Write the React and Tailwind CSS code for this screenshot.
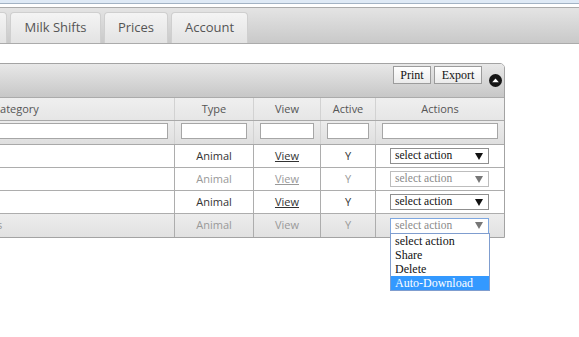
import React from 'react';

const cols = 'grid grid-cols-[316px_79px_67px_55px_129px]';

const rows = [
  { name: 'Cows', active: true },
  { name: 'Heifers', active: false },
  { name: 'Calves', active: true },
  { name: 'Pregnant Dry Cows & Bulls', active: false, hover: true, open: true },
];

const options = ['select action', 'Share', 'Delete', 'Auto-Download'];

const Caret = ({ color }) => (
  <svg width="8" height="7" viewBox="0 0 8 7" className="shrink-0">
    <polygon points="0,0 8,0 4,7" fill={color} />
  </svg>
);

const ActionSelect = ({ active, open }) => (
  <div
    className={`relative ml-[14px] w-[99px] h-[16px] bg-white border flex items-center justify-between pl-[4px] pr-[5px] font-['Liberation_Serif',serif] text-[11.5px] leading-none ${
      open ? 'border-[#7ea7e0] text-[#8a8a8a]' : active ? 'border-[#8f8f8f] text-[#111]' : 'border-[#bdbdbd] text-[#8a8a8a]'
    }`}
  >
    <span>select action</span>
    <Caret color={active ? '#111' : '#777'} />
    {open && (
      <ul className="absolute left-[-1px] top-[14px] w-[100px] bg-white border border-[#7f9dcf] z-10">
        {options.map((o, i) => (
          <li
            key={o}
            className={`h-[14px] leading-[14px] pl-[4px] text-[12px] ${
              i === options.length - 1 ? 'bg-[#3399ff] text-white' : 'text-[#111]'
            }`}
          >
            {o}
          </li>
        ))}
      </ul>
    )}
  </div>
);

export default function App() {
  return (
    <div className="w-[579px] h-[337px] overflow-hidden bg-white font-['Open_Sans',sans-serif]">
      {/* top strip */}
      <div className="h-[4px] bg-[#dfeaf6] border-b border-[#a3b3c4]" />

      {/* tab bar */}
      <div className="mt-[3px] h-[37px] border-y border-[#ababab] bg-gradient-to-b from-[#e4e4e4] to-[#c9c9c9] flex items-end gap-[3px] pt-[4px]">
        <div className="-ml-[60px] w-[67px] h-[31px] rounded-t-[4px] border border-b-0 border-[#cfcfcf] bg-gradient-to-b from-[#f4f4f4] to-[#e3e3e3]" />
        {[
          ['Milk Shifts', 'w-[91px]'],
          ['Prices', 'w-[64px]'],
          ['Account', 'w-[77px]'],
        ].map(([t, w]) => (
          <div
            key={t}
            className={`${w} h-[31px] rounded-t-[4px] border border-b-0 border-[#cfcfcf] bg-gradient-to-b from-[#f4f4f4] to-[#e3e3e3] flex items-center justify-center text-[13px] text-[#555]`}
          >
            {t}
          </div>
        ))}
      </div>

      {/* grid panel */}
      <div className="mt-[19px] -ml-[143px] w-[648px] border border-[#a3a3a3] rounded-tr-[5px]">
        <div className="h-[34px] border-b border-[#ababab] rounded-tr-[4px] bg-gradient-to-b from-[#e8e8e8] to-[#c7c7c7] flex justify-end items-start pt-[2px] pr-[2px]">
          <button className="h-[18px] w-[38px] border border-[#9c9c9c] bg-gradient-to-b from-white to-[#ebebeb] font-['Liberation_Serif',serif] text-[12px] text-[#111] leading-none">
            Print
          </button>
          <button className="ml-[3px] h-[18px] w-[48px] border border-[#9c9c9c] bg-gradient-to-b from-white to-[#ebebeb] font-['Liberation_Serif',serif] text-[12px] text-[#111] leading-none">
            Export
          </button>
          <svg width="13" height="13" viewBox="0 0 13 13" className="ml-[7px] mt-[8px]">
            <circle cx="6.5" cy="6.5" r="6.5" fill="#151515" />
            <polygon points="3.2,8.2 6.5,4.6 9.8,8.2" fill="#fff" />
          </svg>
        </div>

        {/* column headers */}
        <div className={`${cols} h-[23px] border-b border-[#a9a9a9] bg-gradient-to-b from-[#efefef] to-[#e6e6e6] text-[11px] text-[#555]`}>
          {['Category', 'Type', 'View', 'Active', 'Actions'].map((h, i) => (
            <div key={h} className={`flex items-center justify-center ${i ? 'border-l border-[#d2d2d2]' : ''}`}>
              {h}
            </div>
          ))}
        </div>

        {/* filter row */}
        <div className={`${cols} h-[24px] border-b border-[#a9a9a9] bg-gradient-to-b from-[#ececec] to-[#dfdfdf]`}>
          {[0, 1, 2, 3, 4].map((i) => (
            <div key={i} className={`pt-[2px] px-[6px] ${i ? 'border-l border-[#d2d2d2]' : ''}`}>
              <input className="block w-full h-[16px] bg-white border border-[#a6a6a6] outline-none" />
            </div>
          ))}
        </div>

        {/* data rows */}
        {rows.map((r, idx) => {
          const txt = r.active ? 'text-[#333]' : 'text-[#999]';
          return (
            <div
              key={r.name}
              className={`${cols} h-[23px] text-[11px] ${txt} ${idx < rows.length - 1 ? 'border-b border-[#adadad]' : ''} ${
                r.hover ? 'bg-gradient-to-b from-[#ededed] to-[#e1e1e1]' : 'bg-white'
              }`}
            >
              <div className="flex items-center pl-[8px] whitespace-nowrap overflow-hidden">{r.name}</div>
              <div className="flex items-center justify-center border-l border-[#adadad]">Animal</div>
              <div className="flex items-center justify-center border-l border-[#adadad]">
                <span className={r.hover ? '' : 'underline'}>View</span>
              </div>
              <div className="flex items-center justify-center border-l border-[#adadad]">Y</div>
              <div className="flex items-center border-l border-[#adadad]">
                <ActionSelect active={r.active} open={r.open} />
              </div>
            </div>
          );
        })}
      </div>
    </div>
  );
}
